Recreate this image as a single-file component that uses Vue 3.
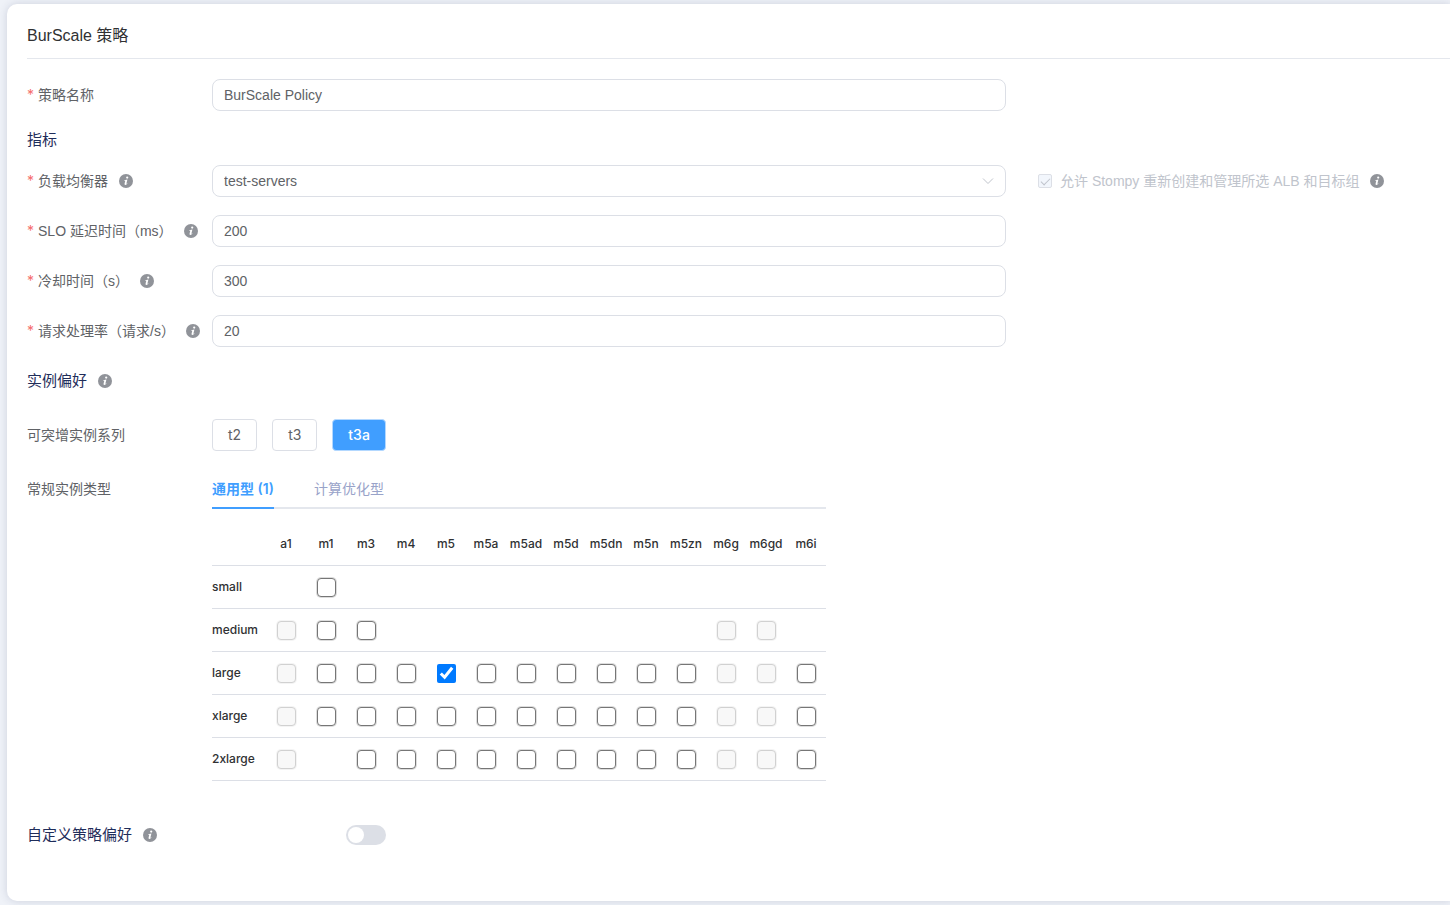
<script setup>
import { ref, reactive, h } from 'vue'

const InfoIcon = () =>
  h('svg', { viewBox: '0 0 14 14', width: 14, height: 14, role: 'img', 'aria-label': '说明' }, [
    h('circle', { cx: 7, cy: 7, r: 7, fill: '#909399' }),
    h('circle', { cx: 8.2, cy: 3.6, r: 1.1, fill: '#fff' }),
    h('path', {
      d: 'M5.2 6.2 L8.4 5.4 L7.4 9.6 Q7.4 10 8.4 9.2 L8.6 9.5 Q7.2 11.1 6.1 10.9 Q5.3 10.7 5.6 9.6 L6.3 6.7 L5.2 6.7 Z',
      fill: '#fff'
    })
  ])

const form = reactive({
  name: 'BurScale Policy',
  balancer: 'test-servers',
  latency: '200',
  cooldown: '300',
  rate: '20'
})

const metrics = [
  { key: 'latency', label: 'SLO 延迟时间（ms）' },
  { key: 'cooldown', label: '冷却时间（s）' },
  { key: 'rate', label: '请求处理率（请求/s）' }
]

const burstable = ['t2', 't3', 't3a']
const family = ref('t3a')
const tabs = ['通用型 (1)', '计算优化型']
const activeTab = ref(0)
const custom = ref(false)

const families = ['a1', 'm1', 'm3', 'm4', 'm5', 'm5a', 'm5ad', 'm5d', 'm5dn', 'm5n', 'm5zn', 'm6g', 'm6gd', 'm6i']
// "." none, "o" available, "x" unavailable
const sizes = [
  { name: 'small', cells: '.o............' },
  { name: 'medium', cells: 'xoo........xx.' },
  { name: 'large', cells: 'xooooooooooxxo' },
  { name: 'xlarge', cells: 'xooooooooooxxo' },
  { name: '2xlarge', cells: 'x.oooooooooxxo' }
]
const selected = ref(['m5.large'])
</script>

<template>
  <main class="card">
    <h1 class="title">BurScale 策略</h1>

    <form @submit.prevent>
      <div class="row">
        <label class="label required" for="name">策略名称</label>
        <input id="name" v-model="form.name" class="field" type="text" />
      </div>

      <h2 class="section">指标</h2>

      <div class="row">
        <div class="label-wrap">
          <label class="label required" for="balancer">负载均衡器</label>
          <InfoIcon class="info" />
        </div>
        <div class="select-wrap">
          <select id="balancer" v-model="form.balancer" class="field">
            <option>test-servers</option>
          </select>
          <svg class="chevron" viewBox="0 0 12 12" width="12" height="12" aria-hidden="true">
            <path d="M1 3.5 L6 8.5 L11 3.5" fill="none" stroke="#c0c4cc" />
          </svg>
        </div>
        <div class="allow">
          <input id="allow" class="allow-box" type="checkbox" checked disabled />
          <label for="allow">允许 Stompy 重新创建和管理所选 ALB 和目标组</label>
          <InfoIcon class="info" />
        </div>
      </div>

      <div v-for="m in metrics" :key="m.key" class="row">
        <div class="label-wrap">
          <label class="label required" :for="m.key">{{ m.label }}</label>
          <InfoIcon class="info" />
        </div>
        <input :id="m.key" v-model="form[m.key]" class="field" type="text" />
      </div>

      <h2 class="section">实例偏好 <InfoIcon class="info" /></h2>

      <div class="row families">
        <span id="burst-label" class="label">可突增实例系列</span>
        <div class="buttons" role="group" aria-labelledby="burst-label">
          <button
            v-for="b in burstable"
            :key="b"
            type="button"
            class="btn"
            :class="{ primary: family === b }"
            :aria-pressed="family === b"
            @click="family = b"
          >{{ b }}</button>
        </div>
      </div>

      <div class="row types">
        <span class="label">常规实例类型</span>
        <div class="types-body">
          <div class="tabs" role="tablist">
            <button
              v-for="(t, i) in tabs"
              :key="t"
              type="button"
              role="tab"
              class="tab"
              :class="{ active: activeTab === i }"
              :aria-selected="activeTab === i"
              @click="activeTab = i"
            >{{ t }}</button>
          </div>
          <table class="matrix">
            <thead>
              <tr>
                <td class="size"></td>
                <th v-for="f in families" :key="f" scope="col"><span>{{ f }}</span></th>
              </tr>
            </thead>
            <tbody>
              <tr v-for="s in sizes" :key="s.name">
                <th class="size" scope="row">{{ s.name }}</th>
                <td v-for="(f, i) in families" :key="f">
                  <input
                    v-if="s.cells[i] !== '.'"
                    v-model="selected"
                    type="checkbox"
                    :value="f + '.' + s.name"
                    :disabled="s.cells[i] === 'x'"
                    :aria-label="f + '.' + s.name"
                  />
                </td>
              </tr>
            </tbody>
          </table>
        </div>
      </div>

      <div class="custom">
        <label class="section" for="custom">自定义策略偏好</label>
        <InfoIcon class="info" />
        <input id="custom" v-model="custom" class="switch" type="checkbox" role="switch" />
      </div>
    </form>
  </main>
</template>

<style>
body {
  background: #eff2f8;
}
</style>

<style scoped>
* {
  box-sizing: border-box;
}
.card {
  margin: 4px 0 4px 7px;
  padding: 0 0 55px 20px;
  background: #fff;
  border-radius: 10px 0 0 10px;
  box-shadow: 0 0 8px rgba(50, 60, 100, 0.18);
  color: #606266;
  font: 14px/20px "Liberation Sans", "Noto Sans CJK SC", sans-serif;
}
.title {
  margin: 0 0 20px;
  padding: 20px 0 10px;
  border-bottom: 1px solid #e4e7ed;
  color: #303133;
  font-size: 16px;
  font-weight: 400;
  line-height: 24px;
}
.row {
  display: grid;
  grid-template-columns: 185px minmax(0, 1fr) 444px;
  align-items: center;
  margin-bottom: 18px;
}
.label-wrap {
  display: flex;
  align-items: center;
  white-space: nowrap;
}
.required::before {
  content: "*";
  margin-right: 4px;
  color: #f56c6c;
  font-family: Inter, sans-serif;
}
.info {
  flex: none;
  margin-left: 11px;
}
.field {
  display: block;
  width: 100%;
  height: 32px;
  padding: 0 11px;
  border: 1px solid #dcdfe6;
  border-radius: 8px;
  outline: none;
  background: #fff;
  color: #606266;
  font: inherit;
  appearance: none;
}
.section {
  display: flex;
  align-items: center;
  margin: 0;
  color: #1f2d5a;
  font-size: 15px;
  font-weight: 400;
  line-height: 22px;
}
h2.section {
  margin-bottom: 14px;
}
.select-wrap {
  position: relative;
}
.chevron {
  position: absolute;
  top: 10px;
  right: 12px;
  pointer-events: none;
}
.allow {
  display: flex;
  align-items: center;
  padding-left: 32px;
  color: #c0c4cc;
  white-space: nowrap;
}
.allow-box {
  display: grid;
  place-items: center;
  width: 14px;
  height: 14px;
  margin: 0 8px 0 0;
  border: 1px solid #dcdfe6;
  border-radius: 2px;
  background: #f2f6fc;
  appearance: none;
}
.allow-box::after {
  content: "";
  width: 8px;
  height: 4px;
  margin-bottom: 2px;
  border: solid #c0c4cc;
  border-width: 0 0 1px 1px;
  transform: rotate(-45deg);
}
h2.section:nth-of-type(2) {
  margin: 23px 0 27px;
}
.families {
  margin-bottom: 28px;
}
.buttons {
  display: flex;
  gap: 15px;
}
.btn {
  height: 32px;
  padding: 0 15px;
  border: 1px solid #dcdfe6;
  border-radius: 4px;
  background: #fff;
  color: #606266;
  font: 14px/20px Inter, sans-serif;
}
.btn.primary {
  border-color: #b3d8ff;
  background: #409eff;
  color: #fff;
  font-weight: 500;
}
.types {
  align-items: start;
  margin-bottom: 43px;
}
.types-body {
  width: 614px;
}
.tabs {
  display: flex;
  gap: 40px;
  border-bottom: 2px solid #e4e7ed;
}
.tab {
  height: 30px;
  margin-bottom: -2px;
  padding: 0 0 10px;
  border: 0;
  border-bottom: 2px solid transparent;
  background: none;
  color: #99a3c9;
  font: 400 14px/20px Inter, "Noto Sans CJK SC", sans-serif;
  white-space: nowrap;
}
.tab.active {
  border-color: #409eff;
  color: #409eff;
  font-weight: 600;
}
.matrix {
  width: 100%;
  margin-top: 14px;
  border-spacing: 0;
  table-layout: fixed;
  color: #303133;
  font: 500 12px/18px Inter, sans-serif;
}
.matrix th,
.matrix td {
  height: 43px;
  padding: 0;
  border-bottom: 1px solid #dcdfe6;
  font-weight: 500;
  text-align: center;
  vertical-align: middle;
}
.matrix .size {
  width: 54px;
  text-align: left;
}
.matrix th span {
  display: flex;
  justify-content: center;
}
.matrix input {
  display: block;
  width: 19px;
  height: 19px;
  margin: 0 auto;
  accent-color: #007aff;
}
.matrix input:not(:checked) {
  border: 1px solid #767676;
  border-radius: 4px;
  background: #fff;
  box-shadow: 0 0 0 1px rgba(118, 118, 118, 0.25);
  appearance: none;
}
.matrix input:disabled {
  border-color: #d1d1d1;
  background: #f8f8f8;
  box-shadow: 0 0 0 1px rgba(118, 118, 118, 0.08);
}
.custom {
  display: flex;
  align-items: center;
}
.switch {
  width: 40px;
  height: 20px;
  margin: 0 0 0 189px;
  padding: 2px;
  border-radius: 10px;
  background: #dcdfe6;
  appearance: none;
}
.switch::before {
  content: "";
  display: block;
  width: 16px;
  height: 16px;
  border-radius: 50%;
  background: #fff;
}
.switch:checked {
  background: #409eff;
}
.switch:checked::before {
  margin-left: auto;
}
</style>
